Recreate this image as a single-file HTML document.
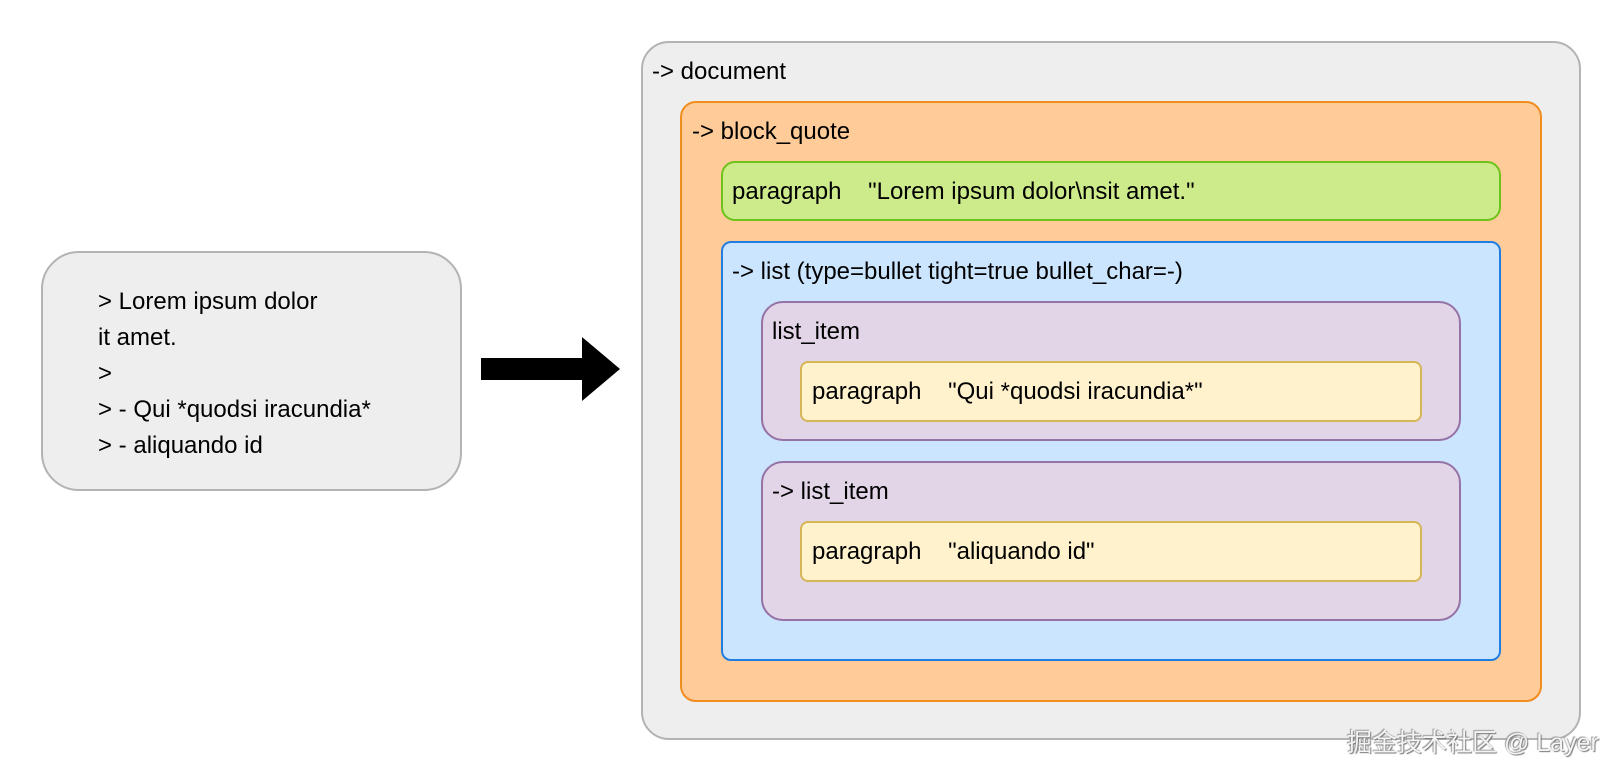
<!DOCTYPE html>
<html><head><meta charset="utf-8"><style>
body{margin:0;width:1622px;height:782px;background:#fff;position:relative;overflow:hidden;font-family:"Liberation Sans",Arial,sans-serif;font-size:24px;color:#000}
.b{position:absolute;box-sizing:border-box;border-width:2px;border-style:solid}
.t{position:absolute;white-space:pre;line-height:26px}
</style></head><body>
<div class="b" style="left:41px;top:251px;width:421px;height:240px;background:#eeeeee;border-color:#b3b3b3;border-radius:38px"></div>
<div class="t" style="left:98px;top:289px">&gt; Lorem ipsum dolor</div>
<div class="t" style="left:98px;top:325px">it amet.</div>
<div class="t" style="left:98px;top:361px">&gt;</div>
<div class="t" style="left:98px;top:397px">&gt; - Qui *quodsi iracundia*</div>
<div class="t" style="left:98px;top:433px">&gt; - aliquando id</div>

<svg style="position:absolute;left:0;top:0" width="1622" height="782"><polygon points="481,358 582,358 582,337 620,369 582,401 582,380 481,380" fill="#000"/></svg>

<div class="b" style="left:641px;top:41px;width:940px;height:699px;background:#eeeeee;border-color:#b3b3b3;border-radius:28px"></div>
<div class="t" style="left:652px;top:59px">-&gt; document</div>
<div class="b" style="left:680px;top:101px;width:862px;height:601px;background:#ffcc99;border-color:#f18c1e;border-radius:16px"></div>
<div class="t" style="left:692px;top:119px">-&gt; block_quote</div>
<div class="b" style="left:721px;top:161px;width:780px;height:60px;background:#cdeb8b;border-color:#6ec21a;border-radius:14px"></div>
<div class="t" style="left:732px;top:179px">paragraph    "Lorem ipsum dolor\nsit amet."</div>
<div class="b" style="left:721px;top:241px;width:780px;height:420px;background:#cce5ff;border-color:#1f7ee0;border-radius:10px"></div>
<div class="t" style="left:732px;top:259px">-&gt; list (type=bullet tight=true bullet_char=-)</div>
<div class="b" style="left:761px;top:301px;width:700px;height:140px;background:#e1d5e7;border-color:#9673a6;border-radius:22px"></div>
<div class="t" style="left:772px;top:319px">list_item</div>
<div class="b" style="left:800px;top:361px;width:622px;height:61px;background:#fff2cc;border-color:#d6b656;border-radius:8px"></div>
<div class="t" style="left:812px;top:379px">paragraph    "Qui *quodsi iracundia*"</div>
<div class="b" style="left:761px;top:461px;width:700px;height:160px;background:#e1d5e7;border-color:#9673a6;border-radius:22px"></div>
<div class="t" style="left:772px;top:479px">-&gt; list_item</div>
<div class="b" style="left:800px;top:521px;width:622px;height:61px;background:#fff2cc;border-color:#d6b656;border-radius:8px"></div>
<div class="t" style="left:812px;top:539px">paragraph    "aliquando id"</div>

<div class="t" style="left:1347px;top:729px;font-family:'Liberation Sans','Noto Sans CJK SC',sans-serif;font-size:25px;line-height:28px;color:#f4f4f4;text-shadow:1px 1px 1px #777,-1px -1px 1px #999">掘金技术社区 @ Layer</div>
</body></html>
